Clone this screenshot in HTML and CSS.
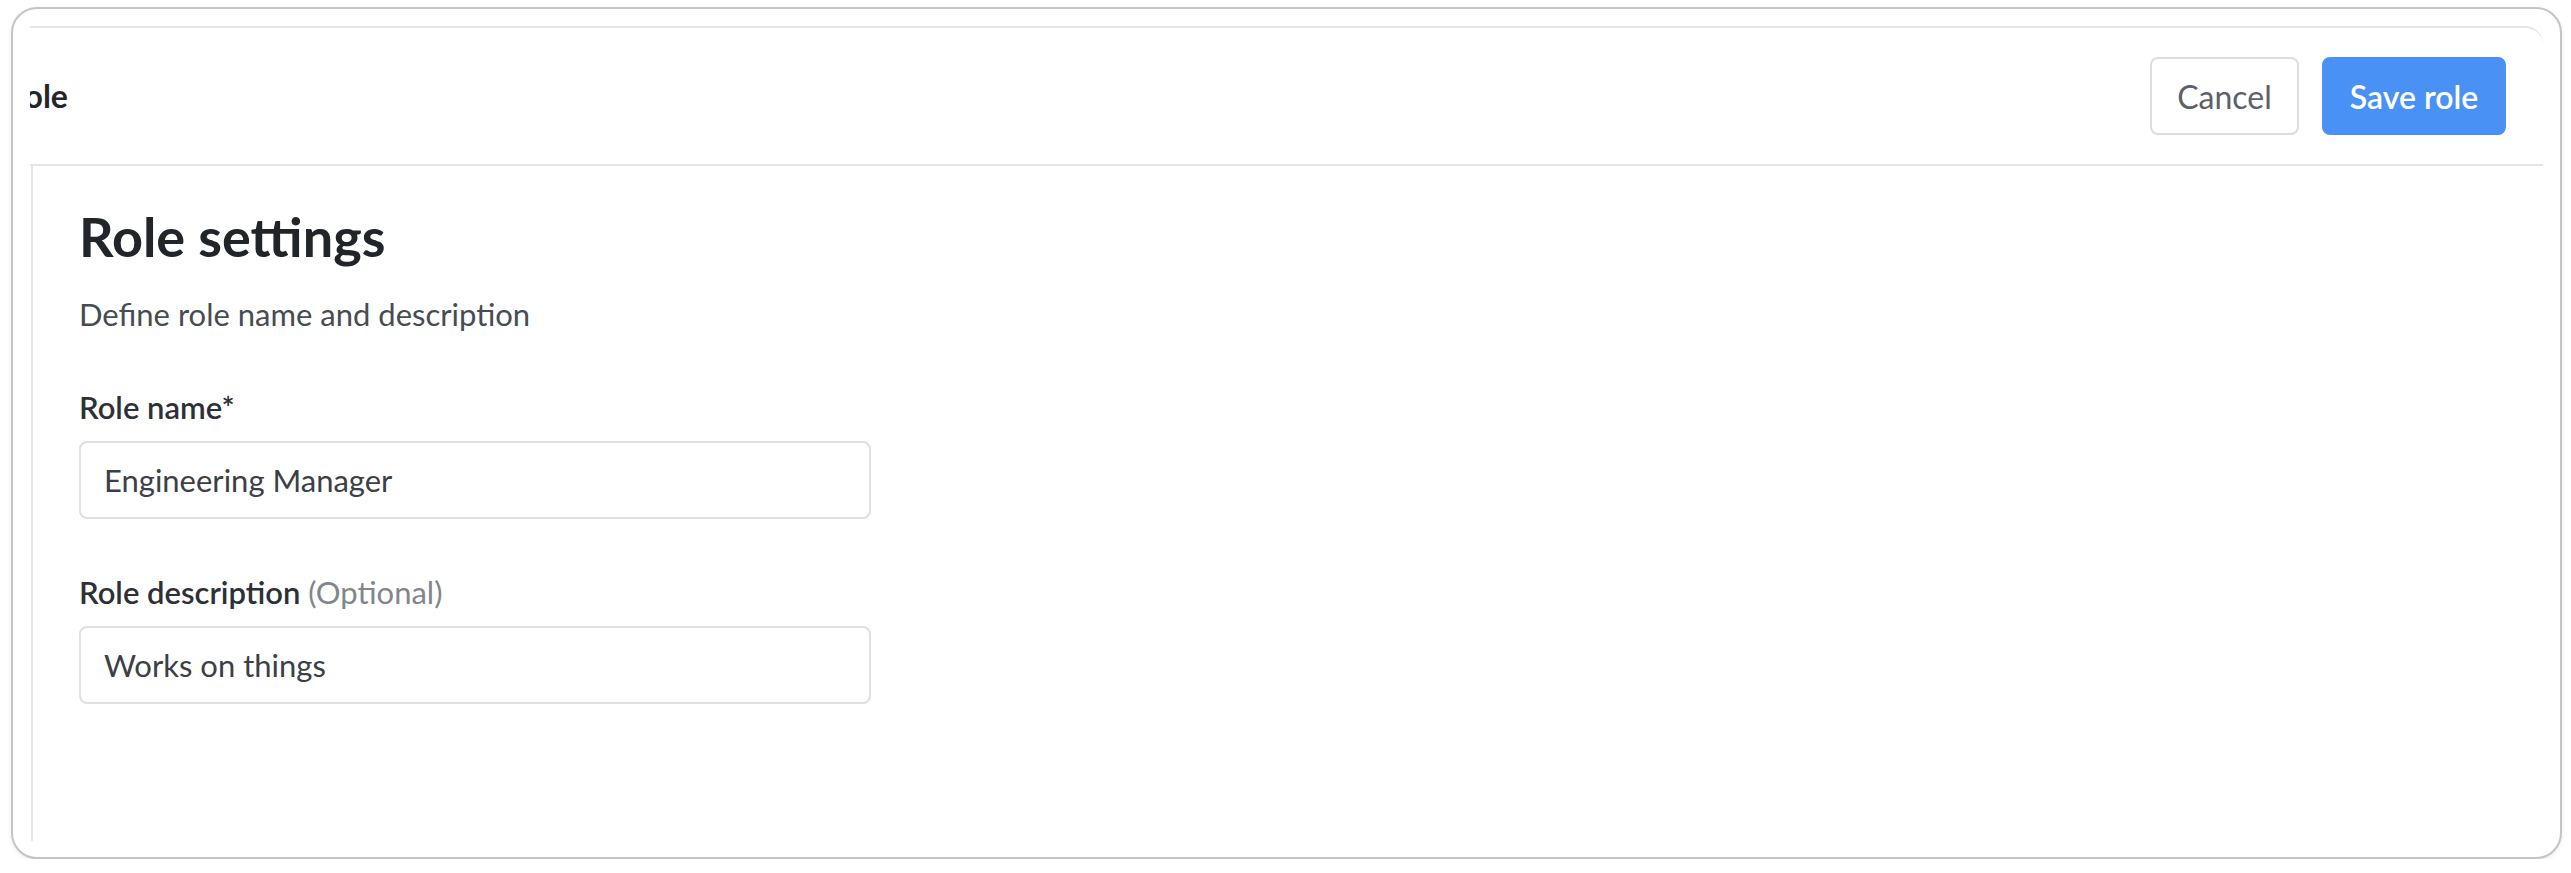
FILE: index.html
```html
<!DOCTYPE html>
<html lang="en">
<head>
<meta charset="utf-8">
<title>Role settings</title>
<link rel="stylesheet" href="styles.css">
</head>
<body>
<div class="frame">
  <div class="panel">
    <header class="panel-header">
      <h1 class="page-title">Role</h1>
      <div class="actions">
        <button class="btn btn-secondary" type="button">Cancel</button>
        <button class="btn btn-primary" type="button">Save role</button>
      </div>
    </header>
    <section class="panel-body">
      <h2 class="section-title">Role settings</h2>
      <p class="section-sub">Define role name and description</p>
      <div class="field">
        <label class="field-label" for="rname">Role name*</label>
        <input class="field-input" id="rname" type="text" value="Engineering Manager">
      </div>
      <div class="field">
        <label class="field-label" for="rdesc">Role description <span class="optional">(Optional)</span></label>
        <input class="field-input" id="rdesc" type="text" value="Works on things">
      </div>
    </section>
  </div>
</div>
</body>
</html>
```

FILE: styles.css
```css
* { box-sizing: border-box; }
html, body { margin: 0; padding: 0; background: #ffffff; }
body {
  font-family: Lato, "Open Sans", "Liberation Sans", sans-serif;
  color: #212529;
}
.frame {
  margin: 7px 0 0 11px;
  width: 2551px;
  height: 852px;
  border: 2px solid #c4c4c4;
  border-radius: 26px;
  box-shadow: 0 2px 5px rgba(0, 0, 0, 0.07);
  overflow: hidden;
  padding: 17px 17px 16px 17px;
  background: #ffffff;
}
.panel {
  height: 100%;
  display: flex;
  flex-direction: column;
  border-top: 2px solid #e3e6ea;
  border-top-right-radius: 18px;
  overflow: hidden;
}
.panel-header {
  height: 138px;
  flex: none;
  display: flex;
  align-items: center;
  justify-content: space-between;
  border-bottom: 2px solid #e3e6ea;
  padding-right: 37px;
}
.page-title {
  margin: 0 0 0 -25px;
  font-size: 32px;
  font-weight: 700;
  color: #23272c;
  line-height: 36px;
}
.actions {
  display: flex;
  gap: 23px;
}
.btn {
  height: 78px;
  border-radius: 8px;
  font-family: Lato, "Open Sans", "Liberation Sans", sans-serif;
  font-size: 32px;
  cursor: pointer;
  padding: 0;
}
.btn-secondary {
  width: 149px;
  background: #ffffff;
  border: 2px solid #dadee3;
  color: #5b6168;
  font-weight: 400;
}
.btn-primary {
  width: 184px;
  background: #4a91f6;
  border: 2px solid #4a91f6;
  color: #ffffff;
  font-weight: 600;
}
.panel-body {
  flex: 1;
  margin-left: 1px;
  border-left: 2px solid #e3e6ea;
  padding: 41px 0 0 46px;
}
.section-title {
  margin: 0;
  font-size: 54px;
  line-height: 60px;
  font-weight: 700;
  color: #212529;
}
.section-sub {
  margin: 27px 0 0 0;
  font-size: 31px;
  line-height: 40px;
  color: #464c53;
}
.field {
  margin-top: 55px;
  width: 792px;
}
.field-label {
  display: block;
  font-size: 31px;
  line-height: 36px;
  font-weight: 600;
  color: #2c3137;
  margin-bottom: 16px;
}
.optional {
  font-weight: 400;
  color: #80868d;
}
.field-input {
  display: block;
  width: 792px;
  height: 78px;
  border: 2px solid #dde1e5;
  border-radius: 8px;
  padding: 0 23px;
  font-family: Lato, "Open Sans", "Liberation Sans", sans-serif;
  font-size: 31px;
  color: #3b4046;
  background: #ffffff;
  outline: none;
}
```
